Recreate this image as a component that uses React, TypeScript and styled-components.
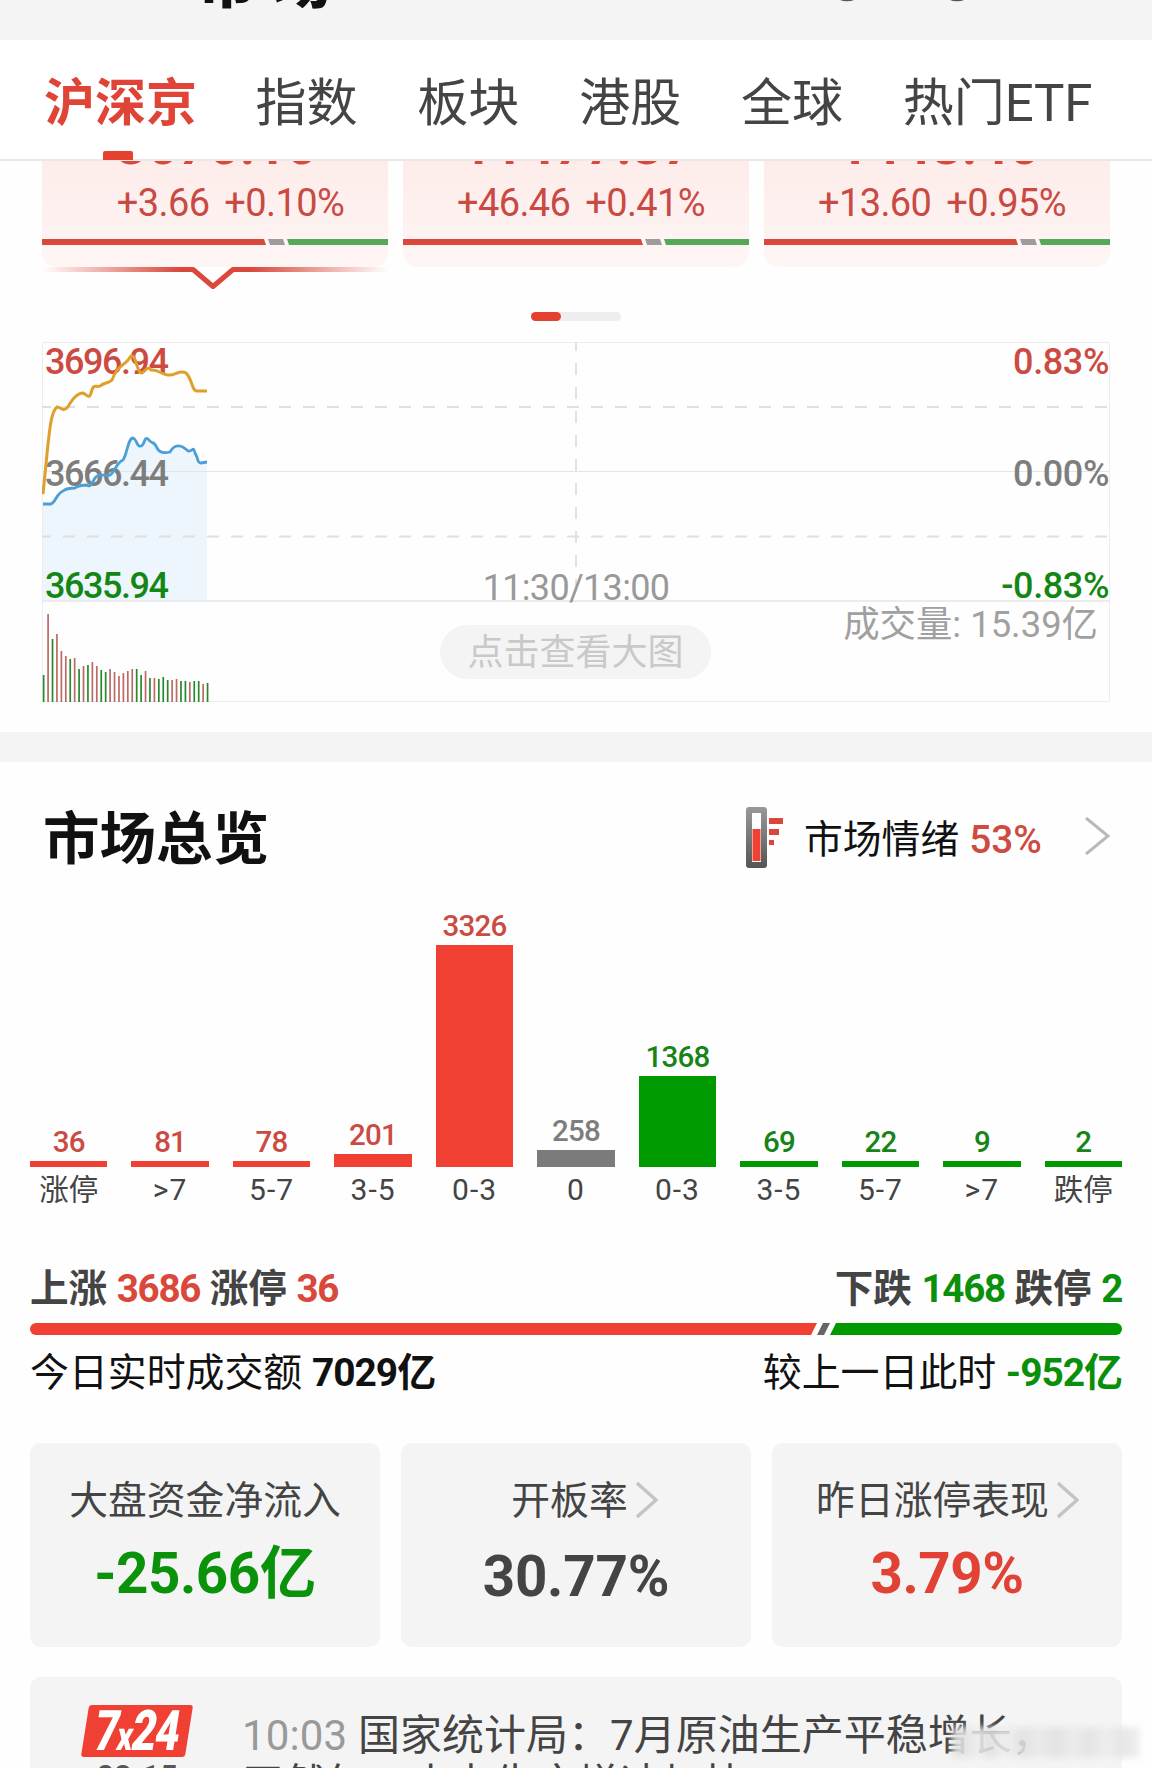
import React from 'react';
import styled, { createGlobalStyle } from 'styled-components';

const RED = '#d9483b';
const BRIGHT = '#ef4033';
const GREEN = '#0a8f0a';

const Global = createGlobalStyle`
  *{box-sizing:border-box}
  html,body{margin:0;padding:0;background:#fdfdfd}
  body{font-family:Roboto,"Noto Sans CJK SC",sans-serif;overflow:hidden}
`;
const Page = styled.main`width:1152px;height:1768px;overflow:hidden;display:flex;flex-direction:column;background:#fefefe;`;

const TopBar = styled.header`height:40px;flex:none;background:#f4f4f4;overflow:hidden;display:flex;padding-left:198px;`;
const TopTitle = styled.div`font-size:58px;line-height:58px;height:58px;margin-top:-46px;font-weight:900;color:#111;letter-spacing:17px;white-space:nowrap;`;
const TopTrace = styled.svg`margin-left:492px;`;

const Tabs = styled.nav`height:121px;flex:none;display:flex;padding:34px 0 0 44px;gap:60px;background:#fff;border-bottom:2px solid #e9e9e9;`;
const Tab = styled.div<{ $on?: boolean }>`
  font-size:51px;line-height:60px;height:85px;white-space:nowrap;flex:none;
  color:${p => (p.$on ? '#e04437' : '#444')};font-weight:${p => (p.$on ? 700 : 400)};
  display:flex;flex-direction:column;align-items:center;
  margin-right:${p => (p.$on ? '-1.5px' : '-.2px')};
`;
const Latin = styled.span`letter-spacing:-.3px;`;
const Underline = styled.i`width:30px;height:9px;margin-top:17px;margin-right:5px;border-radius:2px 2px 0 0;background:#e6412f;flex:none;`;

const Indexes = styled.section`display:grid;grid-template-columns:repeat(3,346px);gap:15px;padding:0 42px;height:131px;flex:none;`;
const IndexCard = styled.div`height:131px;display:flex;flex-direction:column;`;
const IndexBody = styled.div`height:106px;flex:none;background:linear-gradient(#fdecea,#fef6f5);border-radius:0 0 14px 14px;display:flex;flex-direction:column;`;
const IndexPrice = styled.div`height:6px;overflow:hidden;display:flex;justify-content:center;align-items:flex-end;font-size:54px;line-height:43px;font-weight:700;color:${RED};padding-left:3px;`;
const IndexDelta = styled.div<{ $shift: number }>`height:72px;padding:14px 0 0 ${p => p.$shift}px;font-size:38px;line-height:44px;letter-spacing:-.6px;word-spacing:6px;text-align:center;color:#c84a42;white-space:nowrap;`;
const Ratio = styled.svg`display:block;width:346px;height:6px;flex:none;`;
const Pointer = styled.svg`display:block;width:346px;height:23px;flex:none;`;

const Pager = styled.div`height:9px;width:90px;margin:20px auto 21px 531px;border-radius:5px;background:#eee;flex:none;`;
const PagerOn = styled.div`width:30px;height:9px;border-radius:5px;background:#e5412f;`;

const ChartBox = styled.section`width:1068px;height:361px;margin-left:42px;flex:none;position:relative;`;
const ChartSvg = styled.svg`position:absolute;inset:0;width:1068px;height:361px;`;
const Axis = styled.div<{ $c: string; $top: number; $right?: boolean }>`
  position:absolute;top:${p => p.$top}px;${p => (p.$right ? 'right:1px' : 'left:3px')};
  color:${p => p.$c};font-size:36px;line-height:40px;font-weight:500;letter-spacing:${p => (p.$right ? '-.4px' : '-1.45px')};
`;
const Noon = styled.div`position:absolute;left:0;right:0;top:226px;text-align:center;font-size:36px;line-height:40px;color:#999;letter-spacing:-.7px;`;
const Volume = styled.div`position:absolute;right:12px;top:261px;font-size:36.4px;line-height:44px;color:#a0a0a0;`;
const Enlarge = styled.button`position:absolute;left:398px;top:283px;width:271px;height:54px;border:0;padding:1px 0 0;border-radius:27px;background:#f4f4f4;color:#c9c9c9;font:400 36px/50px Roboto,"Noto Sans CJK SC",sans-serif;`;

const Divider = styled.div`height:30px;margin-top:29px;background:#f4f4f4;flex:none;`;

const TitleRow = styled.section`height:167px;flex:none;display:flex;align-items:flex-start;padding:0 42px 0 43px;`;
const Title = styled.h2`margin:40px 0 0;font-size:56.5px;line-height:76px;font-weight:700;color:#111;flex:1;`;
const Mood = styled.div`display:flex;align-items:flex-start;`;
const MoodIcon = styled.svg`margin-top:44px;width:38px;height:64px;margin-right:20px;`;
const MoodText = styled.div`margin-top:54px;font-size:38.8px;line-height:48px;color:#111;white-space:nowrap;width:240px;`;
const MoodValue = styled.span`color:#cf4a40;margin-left:10px;font-weight:500;`;
const MoodArrow = styled.svg`width:26px;height:40px;margin:54px 0 0 40px;`;

const Bars = styled.section`display:grid;grid-template-columns:repeat(11,77.3px);justify-content:space-between;padding:0 30px;height:289px;flex:none;`;
const BarCol = styled.div`display:flex;flex-direction:column;justify-content:flex-end;align-items:center;height:289px;white-space:nowrap;`;
const BarValue = styled.div<{ $c: string }>`font-size:29.5px;line-height:34px;font-weight:500;letter-spacing:-.8px;color:${p => p.$c};margin-bottom:2px;`;
const BarFill = styled.div<{ $c: string }>`width:100%;background:${p => p.$c};flex:none;`;
const BarLabel = styled.div<{ $cjk: boolean }>`height:51px;flex:none;padding-top:3px;font-size:${p => (p.$cjk ? 29.5 : 30)}px;line-height:40px;color:#444;letter-spacing:${p => (p.$cjk ? 0 : 1)}px;`;

const Breadth = styled.section`padding:47px 30px 0;height:225px;flex:none;display:flex;flex-direction:column;`;
const Line = styled.div<{ $bold?: boolean }>`
  display:flex;justify-content:space-between;height:48px;line-height:48px;font-size:${p => (p.$bold ? 38.6 : 38.9)}px;white-space:nowrap;
  font-weight:${p => (p.$bold ? 700 : 400)};color:${p => (p.$bold ? '#444' : '#111')};
`;
const Num = styled.span<{ $c: string; $loose?: boolean }>`color:${p => p.$c};font-weight:700;letter-spacing:${p => (p.$loose ? '-1px' : '-1.3px')};`;
const BreadthBar = styled.svg`display:block;width:1092px;height:12px;margin:10px 0 14px;`;

const Stats = styled.section`display:grid;grid-template-columns:repeat(3,350px);justify-content:space-between;padding:0 30px;flex:none;margin-bottom:30px;`;
const Stat = styled.div`height:204px;border-radius:11px;background:#f4f4f4;display:flex;flex-direction:column;align-items:center;padding-top:34px;white-space:nowrap;`;
const StatLabel = styled.div<{ $inset?: number }>`display:flex;align-items:center;font-size:38.8px;line-height:48px;height:48px;color:#444;padding-left:${p => p.$inset || 0}px;`;
const StatArrow = styled.svg`width:22px;height:36px;margin:0 0 2px 8px;`;
const StatValue = styled.div<{ $c: string; $low?: boolean }>`margin-top:${p => (p.$low ? 19 : 16)}px;font-size:56.5px;line-height:66px;font-weight:700;letter-spacing:${p => (p.$low ? '-.2px' : '-.5px')};color:${p => p.$c};`;

const News = styled.section`margin:0 30px;height:91px;flex:none;border-radius:11px 11px 0 0;background:#f4f4f4;display:flex;padding:28px 0 0 50px;position:relative;`;
const Badge = styled.div`width:114px;flex:none;display:flex;flex-direction:column;align-items:center;`;
const BadgeBox = styled.div`width:104px;height:52px;flex:none;border-radius:3px;transform:skewX(-9deg);background:${BRIGHT};color:#fff;font:900 56px/53px Roboto,sans-serif;display:flex;justify-content:center;`;
const BadgeText = styled.span`transform:scaleX(.76);white-space:nowrap;letter-spacing:-2px;`;
const BadgeX = styled.span`font-size:40px;`;
const BadgeDate = styled.div`font-size:31px;line-height:34px;font-weight:500;color:#555;margin-top:3px;`;
const NewsText = styled.div`margin:4px 0 0 48px;font-size:42px;line-height:54px;color:#444;white-space:nowrap;`;
const NewsLine = styled.div`height:49px;`;
const Time = styled.span`color:#999;margin-right:11px;letter-spacing:.1px;`;
const Watermark = styled.div`
  position:absolute;left:922px;top:50px;width:188px;height:31px;opacity:.88;filter:blur(3px);
  background:linear-gradient(90deg,#e2e2e2 0 8%,#f0f0f0 14%,#dedede 20%,#ededed 26% 30%,#e1e1e1 38%,#eaeaea 46%,#e0e0e0 56%,#ebebeb 63%,#e3e3e3 74%,#eee 82%,#e4e4e4 90%,#ededed);
`;

const indices = [
  { price: '3670.10', delta: '+3.66 +0.10%', red: 224, g: 245, shift: 31 },
  { price: '11477.37', delta: '+46.46 +0.41%', red: 240, g: 261, shift: 10 },
  { price: '1448.46', delta: '+13.60 +0.95%', red: 254, g: 275, shift: 10 },
];
const dist: [number, string, number, string][] = [
  [36, '涨停', 6, 'r'], [81, '>7', 6, 'r'], [78, '5-7', 6, 'r'], [201, '3-5', 13, 'r'], [3326, '0-3', 222, 'r'],
  [258, '0', 17, 'n'], [1368, '0-3', 91, 'g'], [69, '3-5', 6, 'g'], [22, '5-7', 6, 'g'], [9, '>7', 6, 'g'], [2, '跌停', 6, 'g'],
];
const fill: Record<string, string> = { r: BRIGHT, n: '#7b7b7b', g: '#009900' };
const ink: Record<string, string> = { r: '#cb4b42', n: '#7d7d7d', g: '#178417' };

const vols = [27, 88, 63, 68, 51, 46, 43, 44, 33, 36, 37, 40, 36, 32, 30, 33, 30, 26, 29, 31, 33, 33, 27, 31, 24, 24, 23, 25, 22, 22, 23, 21, 21, 20, 21, 21, 18, 19];
const volTone = 'grgrrrgrgrgrrggrrrrrrggrgrgggrrggrggrg';

const PRICE = 'M1 162 H9 C14 160 14 152 21 149 C25 146 29 146 33 146 C37 143 41 143 45 143 C48 146 50 141 53 136 C58 130 62 135 68 133 C73 130 74 121 81 118 C85 113 86 96 91 96 C95 97 95 106 99 104 C103 103 102 94 106 97 C110 103 112 98 115 106 C118 112 124 111 128 110 C133 101 140 103 146 109 C151 110 151 103 153 111 C157 118 155 121 159 121 L165 120';
const AVG = 'M1 152 L5 112 C8 81 10 69 15 65 C19 65 21 70 25 66 C29 60 34 51 41 51 C44 52 47 58 49 51 C52 40 54 46 58 44 C63 40 66 42 70 38 C77 20 82 26 89 14 C94 12 95 32 100 31 C104 28 106 24 109 28 C116 27 120 33 126 33 C133 34 138 27 144 31 C150 36 150 50 155 49 L165 49';

const Chevron = () => (
  <StatArrow viewBox="0 0 22 36"><path d="M1 1L20 18L1 35" fill="none" stroke="#c4c4c4" strokeWidth="3.4" /></StatArrow>
);

export default function App() {
  return (
    <Page>
      <Global />
      <TopBar>
        <TopTitle>市场</TopTitle>
        <TopTrace width="140" height="4" viewBox="0 0 140 4"><ellipse cx="7" cy="-3" rx="10" ry="4.2" fill="#555" /><ellipse cx="117" cy="-3" rx="10" ry="4.2" fill="#555" /></TopTrace>
      </TopBar>
      <Tabs>
        <Tab $on>沪深京<Underline /></Tab>
        <Tab>指数</Tab>
        <Tab>板块</Tab>
        <Tab>港股</Tab>
        <Tab>全球</Tab>
        <Tab><span>热门<Latin>ETF</Latin></span></Tab>
      </Tabs>
      <Indexes>
        {indices.map((it, i) => (
          <IndexCard key={it.price}>
            <IndexBody>
              <IndexPrice>{it.price}</IndexPrice>
              <IndexDelta $shift={it.shift}>{it.delta}</IndexDelta>
              <Ratio viewBox="0 0 346 6">
                <rect width="346" height="6" fill="#fff6f5" />
                <path d={`M0 0H${it.red - 2}l2 6H0z`} fill={RED} />
                <path d={`M${it.red + 2} 0h15l2 6h-15z`} fill="#9d9b9b" />
                <path d={`M${it.g} 0H346V6H${it.g + 2}z`} fill="#55a858" />
              </Ratio>
            </IndexBody>
            {i === 0 && (
              <Pointer viewBox="0 0 346 23">
                <defs><linearGradient id="fade"><stop offset="0" stopColor={RED} stopOpacity="0" /><stop offset=".4" stopColor={RED} /><stop offset=".6" stopColor={RED} /><stop offset="1" stopColor={RED} stopOpacity="0" /></linearGradient></defs>
                <path d="M0 2.500H151L171 19.500L191 2.500H346V2.600" fill="none" stroke="url(#fade)" strokeWidth="5" strokeLinejoin="round" />
              </Pointer>
            )}
          </IndexCard>
        ))}
      </Indexes>
      <Pager><PagerOn /></Pager>
      <ChartBox>
        <ChartSvg viewBox="0 0 1068 361">
          <path d={`${PRICE}V259H1Z`} fill="#edf5fd" />
          <path d="M.5 .5H1067.5V359.5H.5Z" fill="none" stroke="#ededed" />
          <path d="M0 129.500H1068" stroke="#e5e5e5" />
          <path d="M0 259H1068" stroke="#e9ebed" strokeWidth="2" />
          <path d="M0 65H1068M0 194.500H1068M534 0V259" stroke="#dfdfdf" strokeWidth="1.8" strokeDasharray="12 12" strokeDashoffset="3" fill="none" />
        </ChartSvg>
        <Axis $c="#cc4a41" $top={0}>3696.94</Axis>
        <Axis $c="#7d7d7d" $top={112}>3666.44</Axis>
        <Axis $c="#148614" $top={224}>3635.94</Axis>
        <Axis $c="#cc4a41" $top={0} $right>0.83%</Axis>
        <Axis $c="#7d7d7d" $top={112} $right>0.00%</Axis>
        <Axis $c="#148614" $top={224} $right>-0.83%</Axis>
        <Noon>11:30/13:00</Noon>
        <Volume>成交量: 15.39亿</Volume>
        <Enlarge>点击查看大图</Enlarge>
        <ChartSvg viewBox="0 0 1068 361">
          <path d={AVG} fill="none" stroke="#dfa02b" strokeWidth="3" />
          <path d={PRICE} fill="none" stroke="#4b9fd5" strokeWidth="2.8" />
          {vols.map((v, i) => <rect key={i} x={0.8 + i * 4.43} y={360 - v} width="1.7" height={v} fill={volTone[i] === 'g' ? '#268a2b' : '#bd6965'} />)}
        </ChartSvg>
      </ChartBox>
      <Divider />
      <TitleRow>
        <Title>市场总览</Title>
        <Mood>
          <MoodIcon viewBox="0 0 38 64">
            <defs><linearGradient id="tube" x2="0" y2="1"><stop stopColor="#999" /><stop offset="1" stopColor="#555" /></linearGradient></defs>
            <rect x="0" y="1" width="21" height="61" rx="3" fill="url(#tube)" />
            <rect x="6" y="7" width="9" height="49" fill="#fff" /><rect x="6.5" y="23" width="8" height="32" fill={BRIGHT} />
            <path d="M23 12h14v6H23zM23 23h10v6H23zM23 34h5v5h-5z" fill={RED} />
          </MoodIcon>
          <MoodText>市场情绪<MoodValue>53%</MoodValue></MoodText>
          <MoodArrow viewBox="0 0 26 40"><path d="M2 2L24 20L2 38" fill="none" stroke="#b9b9b9" strokeWidth="3" /></MoodArrow>
        </Mood>
      </TitleRow>
      <Bars>
        {dist.map(([n, label, h, c], i) => (
          <BarCol key={i}>
            <BarValue $c={ink[c]}>{n}</BarValue>
            <BarFill $c={fill[c]} style={{ height: h }} />
            <BarLabel $cjk={label.endsWith('停')}>{label}</BarLabel>
          </BarCol>
        ))}
      </Bars>
      <Breadth>
        <Line $bold>
          <span>上涨 <Num $c={RED}>3686</Num> 涨停 <Num $c={RED}>36</Num></span>
          <span>下跌 <Num $c="#0b900b">1468</Num> 跌停 <Num $c="#0b900b">2</Num></span>
        </Line>
        <BreadthBar viewBox="0 0 1092 12">
          <path d="M6 0H787l-6 12H6a6 6 0 0 1 0-12z" fill={BRIGHT} />
          <path d="M793 0h7l-6 12h-7z" fill="#666" />
          <path d="M806 0H1086a6 6 0 0 1 0 12H800z" fill="#009900" />
        </BreadthBar>
        <Line>
          <span>今日实时成交额 <Num $c="#111" $loose>7029亿</Num></span>
          <span>较上一日此时 <Num $c={GREEN} $loose>-952亿</Num></span>
        </Line>
      </Breadth>
      <Stats>
        <Stat><StatLabel>大盘资金净流入</StatLabel><StatValue $c="#0a930a">-25.66亿</StatValue></Stat>
        <Stat><StatLabel $inset={17}>开板率<Chevron /></StatLabel><StatValue $c="#444" $low>30.77%</StatValue></Stat>
        <Stat><StatLabel $inset={1}>昨日涨停表现<Chevron /></StatLabel><StatValue $c="#e24236">3.79%</StatValue></Stat>
      </Stats>
      <News>
        <Badge><BadgeBox><BadgeText>7<BadgeX>x</BadgeX>24</BadgeText></BadgeBox><BadgeDate>08-15</BadgeDate></Badge>
        <NewsText><NewsLine><Time>10:03</Time>国家统计局：7月原油生产平稳增长，</NewsLine><NewsLine>天然气、电力生产增速加快</NewsLine></NewsText>
        <Watermark />
      </News>
    </Page>
  );
}
